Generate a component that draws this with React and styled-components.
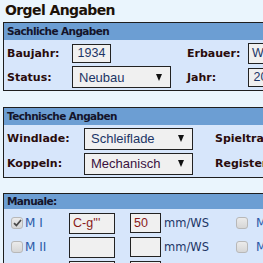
import React from 'react'
import styled, { createGlobalStyle } from 'styled-components'

const GlobalStyle = createGlobalStyle`
  html, body {
    margin: 0;
    padding: 0;
    background: #eaf5fd;
    overflow: hidden;
  }
`

const Page = styled.div`
  width: 600px;
  font-family: 'DejaVu Sans', Verdana, sans-serif;
`

const Title = styled.h1`
  margin: 0;
  height: 22px;
  padding: 2px 0 0 5px;
  box-sizing: border-box;
  font-size: 14px;
  line-height: 17px;
  font-weight: bold;
  letter-spacing: -0.6px;
  color: #1c1208;
`

const Section = styled.section`
  margin: 0 0 ${(p) => p.$gap || 0}px 3px;
  border: 1px solid #1e1e1e;
  background: #d7e6fb;
`

const Header = styled.div`
  height: ${(p) => p.$h || 17}px;
  background: #6c9ed3;
  padding-left: 3px;
  font-size: 10.5px;
  font-weight: bold;
  letter-spacing: -0.6px;
  line-height: ${(p) => p.$h || 17}px;
  color: #14142a;
`

const Grid = styled.div`
  display: grid;
  grid-template-columns: ${(p) => p.$cols};
  grid-auto-rows: ${(p) => p.$row}px;
  align-items: center;
  padding: ${(p) => p.$pad || '1px 0'};
`

const Label = styled.span`
  padding-left: 3px;
  font-size: 11px;
  font-weight: bold;
  color: #2a0c0c;
`

const Input = styled.div`
  box-sizing: border-box;
  width: ${(p) => p.$w}px;
  height: ${(p) => p.$h || 19}px;
  border: 1px solid #222;
  background: #f0f0f0;
  font-family: 'Liberation Sans', Arial, sans-serif;
  font-size: 12.5px;
  line-height: ${(p) => (p.$h || 19) - 2}px;
  padding: 0 3px;
  text-align: ${(p) => p.$align || 'left'};
  color: ${(p) => p.$color || '#1c3566'};
  white-space: nowrap;
  overflow: hidden;
`

const Select = styled.div`
  box-sizing: border-box;
  width: ${(p) => p.$w}px;
  height: 22px;
  border: 1px solid #222;
  background: #f0f0f0;
  display: flex;
  align-items: center;
  justify-content: space-between;
  padding: 0 8px 0 6px;
  font-family: 'Liberation Sans', Arial, sans-serif;
  font-size: 13px;
  color: ${(p) => p.$color || '#1c3566'};
`

const Arrow = styled.span`
  width: 0;
  height: 0;
  border-left: 3.5px solid transparent;
  border-right: 3.5px solid transparent;
  border-top: 7px solid #111;
`

const Box = styled.span`
  box-sizing: border-box;
  width: 12px;
  height: 12px;
  margin-left: 7px;
  border: 1px solid #b8b8b8;
  border-radius: 3px;
  background: linear-gradient(#ebebeb, #d6d6d6);
  display: flex;
  align-items: center;
  justify-content: center;
`

const ManLabel = styled.span`
  font-size: ${(p) => p.$size || 12}px;
  color: ${(p) => p.$color || '#2a5aa8'};
  white-space: nowrap;
`

const Check = ({ checked }) => (
  <Box>
    {checked && (
      <svg width='9' height='8' viewBox='0 0 9 8'>
        <path d='M1 4.2 L3.4 6.5 L8 1' stroke='#4a4a4a' strokeWidth='1.8' fill='none' />
      </svg>
    )}
  </Box>
)

const manuals = [
  { name: 'M I', range: "C-g'''", press: '50', checked: true, other: 'M IV' },
  { name: 'M II', range: '', press: '', checked: false, other: 'M V' },
  { name: 'M III', range: "C-f'''", press: '50', checked: false, other: 'M VI' },
]

export default function App() {
  return (
    <Page>
      <GlobalStyle />
      <Title>Orgel Angaben</Title>

      <Section $gap={16}>
        <Header>Sachliche Angaben</Header>
        <Grid $cols='68px 112px 64px 300px' $row={24} $pad='1px 0 1px'>
          <Label>Baujahr:</Label>
          <Input $w={39} $align='center'>1934</Input>
          <Label>Erbauer:</Label>
          <Input $w={200} $h={21}>Walcker</Input>
          <Label>Status:</Label>
          <Select $w={99}>Neubau<Arrow /></Select>
          <Label>Jahr:</Label>
          <Input $w={39} $align='center'>2004</Input>
        </Grid>
      </Section>

      <Section $gap={15}>
        <Header>Technische Angaben</Header>
        <Grid $cols='80px 128px 300px' $row={25} $pad='1px 0 1px'>
          <Label>Windlade:</Label>
          <Select $w={109}>Schleiflade<Arrow /></Select>
          <Label>Spieltraktur:</Label>
          <Label>Koppeln:</Label>
          <Select $w={109} $color='#3a1040'>Mechanisch<Arrow /></Select>
          <Label>Registertraktur:</Label>
        </Grid>
      </Section>

      <Section>
        <Header $h={15}>Manuale:</Header>
        <Grid $cols='21px 44px 61px 34px 65px 27px 100px' $row={24} $pad='2px 0 0'>
          {manuals.map((m) => (
            <React.Fragment key={m.name}>
              <Check checked={m.checked} />
              <ManLabel>{m.name}</ManLabel>
              <Input $w={46} $h={21} $color='#8a1a1a'>{m.range}</Input>
              <Input $w={31} $h={20} $color='#8a1a1a'>{m.press}</Input>
              <ManLabel $color='#1c3566' $size={11.5}>mm/WS</ManLabel>
              <Check />
              <ManLabel>{m.other}</ManLabel>
            </React.Fragment>
          ))}
        </Grid>
      </Section>
    </Page>
  )
}
